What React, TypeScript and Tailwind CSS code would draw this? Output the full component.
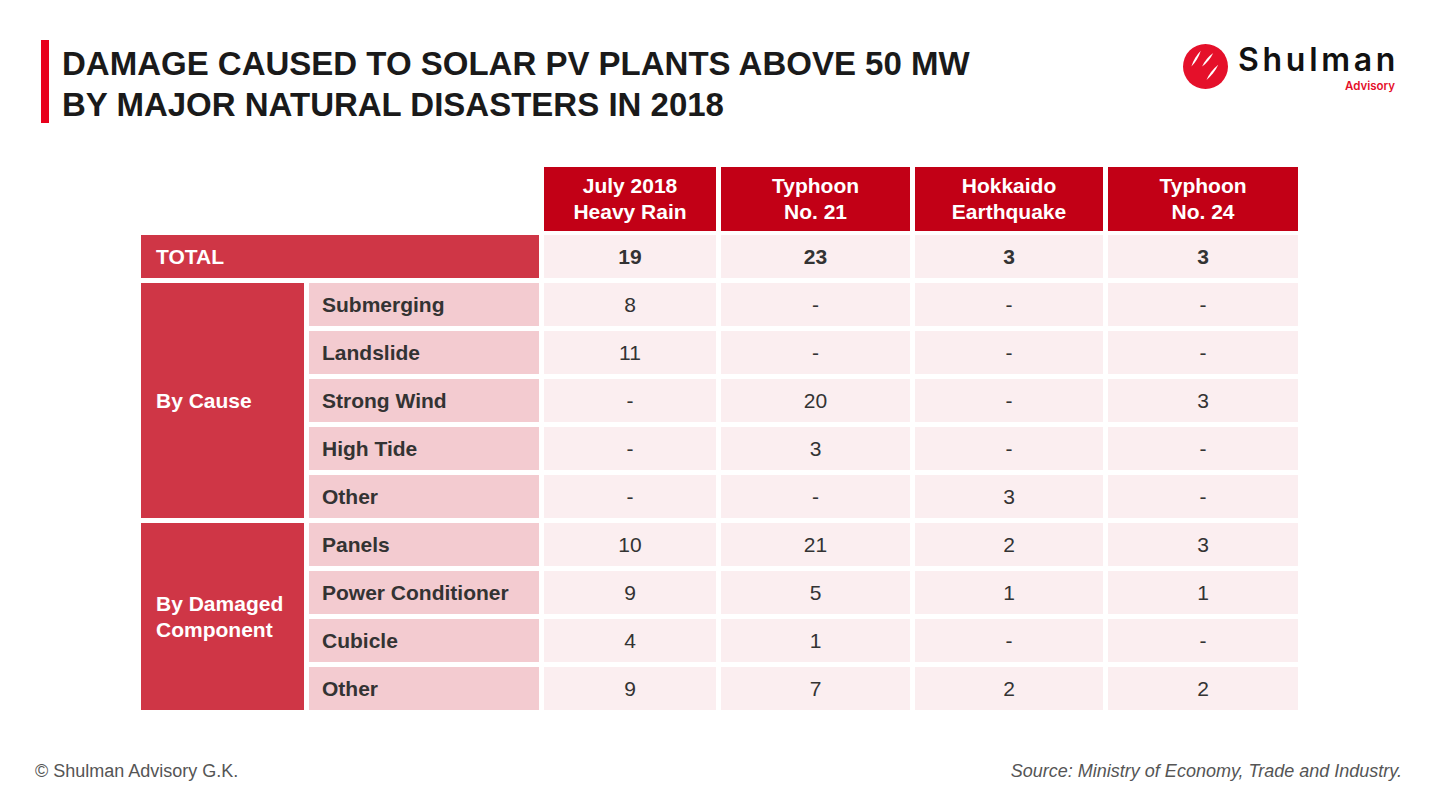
import React from "react";

const headers = [
  ["July 2018", "Heavy Rain"],
  ["Typhoon", "No. 21"],
  ["Hokkaido", "Earthquake"],
  ["Typhoon", "No. 24"],
];

const causeRows: [string, string[]][] = [
  ["Submerging", ["8", "-", "-", "-"]],
  ["Landslide", ["11", "-", "-", "-"]],
  ["Strong Wind", ["-", "20", "-", "3"]],
  ["High Tide", ["-", "3", "-", "-"]],
  ["Other", ["-", "-", "3", "-"]],
];

const compRows: [string, string[]][] = [
  ["Panels", ["10", "21", "2", "3"]],
  ["Power Conditioner", ["9", "5", "1", "1"]],
  ["Cubicle", ["4", "1", "-", "-"]],
  ["Other", ["9", "7", "2", "2"]],
];

function Logo() {
  const leaf = (
    ax: number,
    ay: number,
    bx: number,
    by: number,
    w: number
  ) => {
    const dx = bx - ax;
    const dy = by - ay;
    const len = Math.sqrt(dx * dx + dy * dy);
    const nx = (-dy / len) * w;
    const ny = (dx / len) * w;
    const mx = (ax + bx) / 2;
    const my = (ay + by) / 2;
    return `M${ax} ${ay} Q${mx + nx} ${my + ny} ${bx} ${by} Q${mx - nx} ${my - ny} ${ax} ${ay}Z`;
  };
  return (
    <div className="flex items-start gap-[10px] pt-[4px]">
      <svg width="45" height="45" viewBox="0 0 100 100">
        <circle cx="50" cy="50" r="50" fill="#e5102a" />
        <path d={leaf(18.6, 50, 39.5, 14.9, 5)} fill="#fff" />
        <path d={leaf(42.5, 50, 67.1, 20.1, 5)} fill="#fff" />
        <path d={leaf(52.2, 79.8, 78.3, 46.3, 5)} fill="#fff" />
      </svg>
      <div className="flex flex-col items-end">
        <div className="font-['Inter',sans-serif] font-semibold text-[32px] leading-[32px] tracking-[0.115em] text-[#111] mr-[-4px]">
          Shulman
        </div>
        <div className="font-['Inter',sans-serif] font-semibold text-[11.5px] leading-[14px] text-[#e5102a] mt-[3px]">
          Advisory
        </div>
      </div>
    </div>
  );
}

const cellText = "font-['Liberation_Sans',Arial,sans-serif] text-[21px]";

function DataCells({ values, bold }: { values: string[]; bold?: boolean }) {
  return (
    <>
      {values.map((v, i) => (
        <div
          key={i}
          className={`bg-[#fbeef0] flex items-center justify-center text-[#333] ${cellText} ${bold ? "font-bold" : ""}`}
        >
          {v}
        </div>
      ))}
    </>
  );
}

export default function App() {
  return (
    <div className="w-[1439px] h-[808px] bg-white flex flex-col font-['Liberation_Sans',Arial,sans-serif]">
      <div className="flex justify-between items-start pt-[40px] pl-[41px] pr-[44px]">
        <div className="flex items-start">
          <div className="w-[8px] h-[83px] bg-[#e8001c]" />
          <div className="ml-[13px] mt-[3px] font-bold text-[33px] leading-[41px] text-[#1a1a1a]">
            <div>DAMAGE CAUSED TO SOLAR PV PLANTS ABOVE 50 MW</div>
            <div>BY MAJOR NATURAL DISASTERS IN 2018</div>
          </div>
        </div>
        <Logo />
      </div>

      <div className="mt-[42px] pl-[141px]">
        <div className="grid grid-cols-[163px_230px_172px_189px_188px_190px] grid-rows-[63px_repeat(10,43px)] gap-[5px] w-max">
          <div className="col-span-2" />
          {headers.map((h, i) => (
            <div
              key={i}
              className={`bg-[#c20016] flex flex-col items-center justify-center text-white font-bold ${cellText} leading-[26px] mb-[-1px]`}
            >
              <div>{h[0]}</div>
              <div>{h[1]}</div>
            </div>
          ))}

          <div
            className={`col-span-2 bg-[#cf3646] flex items-center pl-[15px] text-white font-bold ${cellText}`}
          >
            TOTAL
          </div>
          <DataCells values={["19", "23", "3", "3"]} bold />

          {causeRows.map(([label, vals], i) => (
            <React.Fragment key={"c" + i}>
              {i === 0 && (
                <div
                  className={`row-span-5 bg-[#cf3646] flex items-center pl-[15px] text-white font-bold ${cellText}`}
                >
                  By Cause
                </div>
              )}
              <div
                className={`bg-[#f3cbd0] flex items-center pl-[13px] text-[#333] font-bold ${cellText}`}
              >
                {label}
              </div>
              <DataCells values={vals} />
            </React.Fragment>
          ))}

          {compRows.map(([label, vals], i) => (
            <React.Fragment key={"d" + i}>
              {i === 0 && (
                <div
                  className={`row-span-4 bg-[#cf3646] flex flex-col justify-center pl-[15px] text-white font-bold ${cellText} leading-[26px]`}
                >
                  <div>By Damaged</div>
                  <div>Component</div>
                </div>
              )}
              <div
                className={`bg-[#f3cbd0] flex items-center pl-[13px] text-[#333] font-bold ${cellText}`}
              >
                {label}
              </div>
              <DataCells values={vals} />
            </React.Fragment>
          ))}
        </div>
      </div>

      <div className="mt-auto flex justify-between items-center pl-[35px] pr-[37px] pb-[27px] text-[18px] leading-[20px] text-[#555]">
        <div>© Shulman Advisory G.K.</div>
        <div className="italic">Source: Ministry of Economy, Trade and Industry.</div>
      </div>
    </div>
  );
}
